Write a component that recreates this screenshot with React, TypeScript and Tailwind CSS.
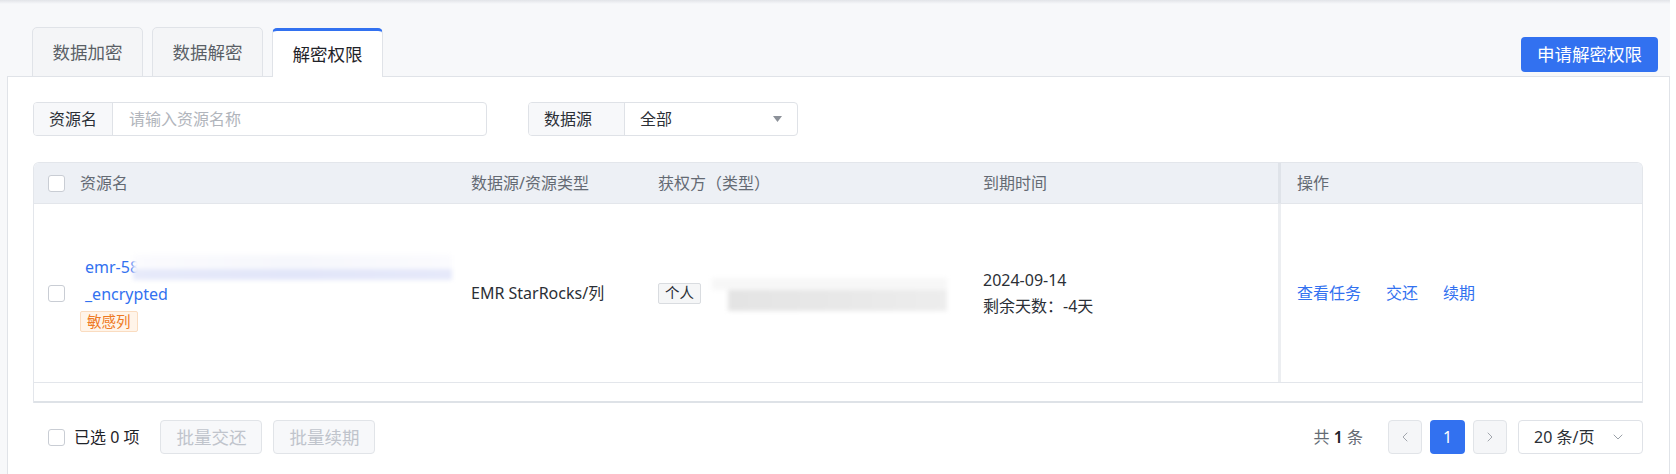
import { ChevronLeft, ChevronRight, ChevronDown } from "lucide-react";

const font = { fontFamily: '"Noto Sans", "Noto Sans CJK SC", sans-serif' };

function Checkbox({ className = "" }: { className?: string }) {
  return <span className={`inline-block h-[17px] w-[17px] shrink-0 rounded-[3px] border border-[#c9cdd4] bg-white ${className}`} />;
}

function Tab({ label, active }: { label: string; active?: boolean }) {
  if (active) {
    return (
      <div className="relative z-10 -mb-px flex h-[49px] w-[111px] items-center justify-center rounded-t-[5px] border border-b-0 border-t-[3px] border-[#e0e3e8] border-t-[#3271f0] bg-white text-[17.5px] text-[#1f2329]">
        {label}
      </div>
    );
  }
  return (
    <div className="-mb-px flex h-[50px] w-[111px] items-center justify-center rounded-t-[5px] border border-[#e0e3e8] bg-[#f4f5f7] text-[17.5px] text-[#5a5f66]">
      {label}
    </div>
  );
}

export default function App() {
  return (
    <div className="h-[474px] w-[1676px] overflow-hidden bg-white" style={font}>
      <div className="flex h-[474px] w-[1670px] flex-col bg-[#f7f8fa]">
        <div className="h-[4px] bg-gradient-to-b from-[#e2e4e8] to-[#f7f8fa]" />

        {/* tabs + action */}
        <div className="flex items-end justify-between pl-[32px] pr-[12px] pt-[23px]">
          <div className="flex items-end gap-[9px]">
            <Tab label="数据加密" />
            <Tab label="数据解密" />
            <Tab label="解密权限" active />
          </div>
          <button className="mb-[4px] h-[35px] w-[137px] rounded-[4px] bg-[#3271f0] text-[17.5px] text-white">申请解密权限</button>
        </div>

        <div className="ml-[7px] flex-1 border-x border-t border-[#e0e3e8] bg-white pl-[25px] pr-[26px] pt-[25px]">
          {/* filters */}
          <div className="flex items-center gap-[41px] text-[16px]">
            <div className="flex h-[34px] w-[454px] overflow-hidden rounded-[4px] border border-[#dfe2e7]">
              <div className="flex w-[79px] items-center border-r border-[#dfe2e7] bg-[#f7f8fa] pl-[15px] text-[#2b2f36]">资源名</div>
              <div className="flex flex-1 items-center pl-[16px] text-[#b1b5bc]">请输入资源名称</div>
            </div>
            <div className="flex h-[34px] w-[270px] overflow-hidden rounded-[4px] border border-[#dfe2e7]">
              <div className="flex w-[96px] items-center border-r border-[#dfe2e7] bg-[#f7f8fa] pl-[15px] text-[#2b2f36]">数据源</div>
              <div className="flex flex-1 items-center justify-between pl-[15px] pr-[15px] text-[#2b2f36]">
                <span>全部</span>
                <svg width="9" height="6" viewBox="0 0 9 6"><path d="M0 0h9L4.5 6z" fill="#8c9199" /></svg>
              </div>
            </div>
          </div>

          {/* table */}
          <div className="mt-[26px] overflow-hidden rounded-t-[6px] border-x border-t border-[#e3e6eb] text-[16px]">
            <div className="grid h-[40px] grid-cols-[30px_391px_187px_325px_311px_1fr] items-stretch bg-[#edf0f5] text-[#646a73]">
              <div className="flex items-center pl-[14px]"><Checkbox /></div>
              <div className="flex items-center pl-[16px]">资源名</div>
              <div className="flex items-center pl-[16px]">数据源/资源类型</div>
              <div className="flex items-center pl-[16px]">获权方（类型）</div>
              <div className="flex items-center pl-[16px]">到期时间</div>
              <div className="flex items-center border-l-[3px] border-[#dfe3e9] pl-[16px]">操作</div>
            </div>
            <div className="grid h-[180px] grid-cols-[30px_391px_187px_325px_311px_1fr] border-y border-[#e3e6eb] text-[#2b2f36]">
              <div className="flex items-center pl-[14px]"><Checkbox /></div>
              <div className="flex flex-col justify-center pl-[16px]">
                <div className="flex h-[27px] items-center pl-[5px] text-[#3271f0]">
                  <span>emr-58</span>
                  <span className="relative -ml-[6px] h-[28px] w-[319px] blur-[2px]">
                    <span className="absolute inset-x-0 top-[2px] h-[14px] bg-gradient-to-r from-[#fbfbfe] via-[#f6f7fc] to-[#fbfbfe]" />
                    <span className="absolute inset-x-0 bottom-[1px] h-[11px] bg-gradient-to-r from-[#e7eafa] via-[#e2e6f9] to-[#e6e9fa]" />
                  </span>
                </div>
                <div className="flex h-[27px] items-center pl-[5px] text-[#3271f0]">_encrypted</div>
                <div className="mt-[2px]">
                  <span className="inline-flex h-[21px] items-center rounded-[2px] border border-[#fadcc0] bg-[#fff4e9] px-[6px] text-[14.5px] text-[#ee7a24]">敏感列</span>
                </div>
              </div>
              <div className="flex items-center pl-[16px]">EMR StarRocks/列</div>
              <div className="flex items-center pl-[16px]">
                <span className="inline-flex h-[21px] items-center rounded-[2px] border border-[#d9dce0] bg-[#f5f6f7] px-[6px] text-[14.5px]">个人</span>
                <span className="relative ml-[11px] h-[35px] w-[235px] blur-[2px]">
                  <span className="absolute inset-x-0 top-[2px] h-[12px] bg-[#f7f7f7]" />
                  <span className="absolute inset-x-[16px] bottom-0 right-0 h-[21px] bg-gradient-to-r from-[#e4e4e4] via-[#e8e8e8] to-[#ededed]" />
                </span>
              </div>
              <div className="flex flex-col justify-center pl-[16px] leading-[26px]">
                <div>2024-09-14</div>
                <div>剩余天数：-4天</div>
              </div>
              <div className="flex items-center gap-[25px] border-l-[3px] border-[#eceef1] pl-[16px] text-[#3271f0]">
                <span>查看任务</span>
                <span>交还</span>
                <span>续期</span>
              </div>
            </div>
            <div className="h-[20px] border-b-[2px] border-[#dee2e7]" />
          </div>

          {/* footer */}
          <div className="mt-[17px] flex h-[34px] items-center justify-between">
            <div className="flex items-center pl-[15px]">
              <Checkbox />
              <span className="ml-[9px] text-[16px] text-[#1f2329]">已选 0 项</span>
              <button className="ml-[21px] h-[34px] w-[102px] rounded-[4px] border border-[#e1e4e8] bg-[#f7f8fa] text-[17.5px] text-[#c0c4cc]">批量交还</button>
              <button className="ml-[11px] h-[34px] w-[102px] rounded-[4px] border border-[#e1e4e8] bg-[#f7f8fa] text-[17.5px] text-[#c0c4cc]">批量续期</button>
            </div>
            <div className="flex items-center">
              <span className="text-[16px] text-[#646a73]">共 <b className="font-semibold text-[#1f2329]">1</b> 条</span>
              <span className="ml-[25px] flex h-[34px] w-[34px] items-center justify-center rounded-[4px] border border-[#e1e4e8] bg-[#f5f6f8] text-[#a3a7ae]">
                <ChevronLeft size={16} strokeWidth={1.5} />
              </span>
              <span className="ml-[8px] flex h-[34px] w-[35px] items-center justify-center rounded-[4px] bg-[#3271f0] text-[16px] text-white">1</span>
              <span className="ml-[8px] flex h-[34px] w-[34px] items-center justify-center rounded-[4px] border border-[#e1e4e8] bg-[#f5f6f8] text-[#a3a7ae]">
                <ChevronRight size={16} strokeWidth={1.5} />
              </span>
              <span className="ml-[11px] flex h-[34px] w-[125px] items-center justify-between rounded-[4px] border border-[#dfe2e7] bg-white pl-[15px] pr-[16px] text-[16px] text-[#2b2f36]">
                <span>20 条/页</span>
                <ChevronDown size={16} strokeWidth={1.5} className="text-[#9aa0a8]" />
              </span>
            </div>
          </div>
        </div>
      </div>
    </div>
  );
}
